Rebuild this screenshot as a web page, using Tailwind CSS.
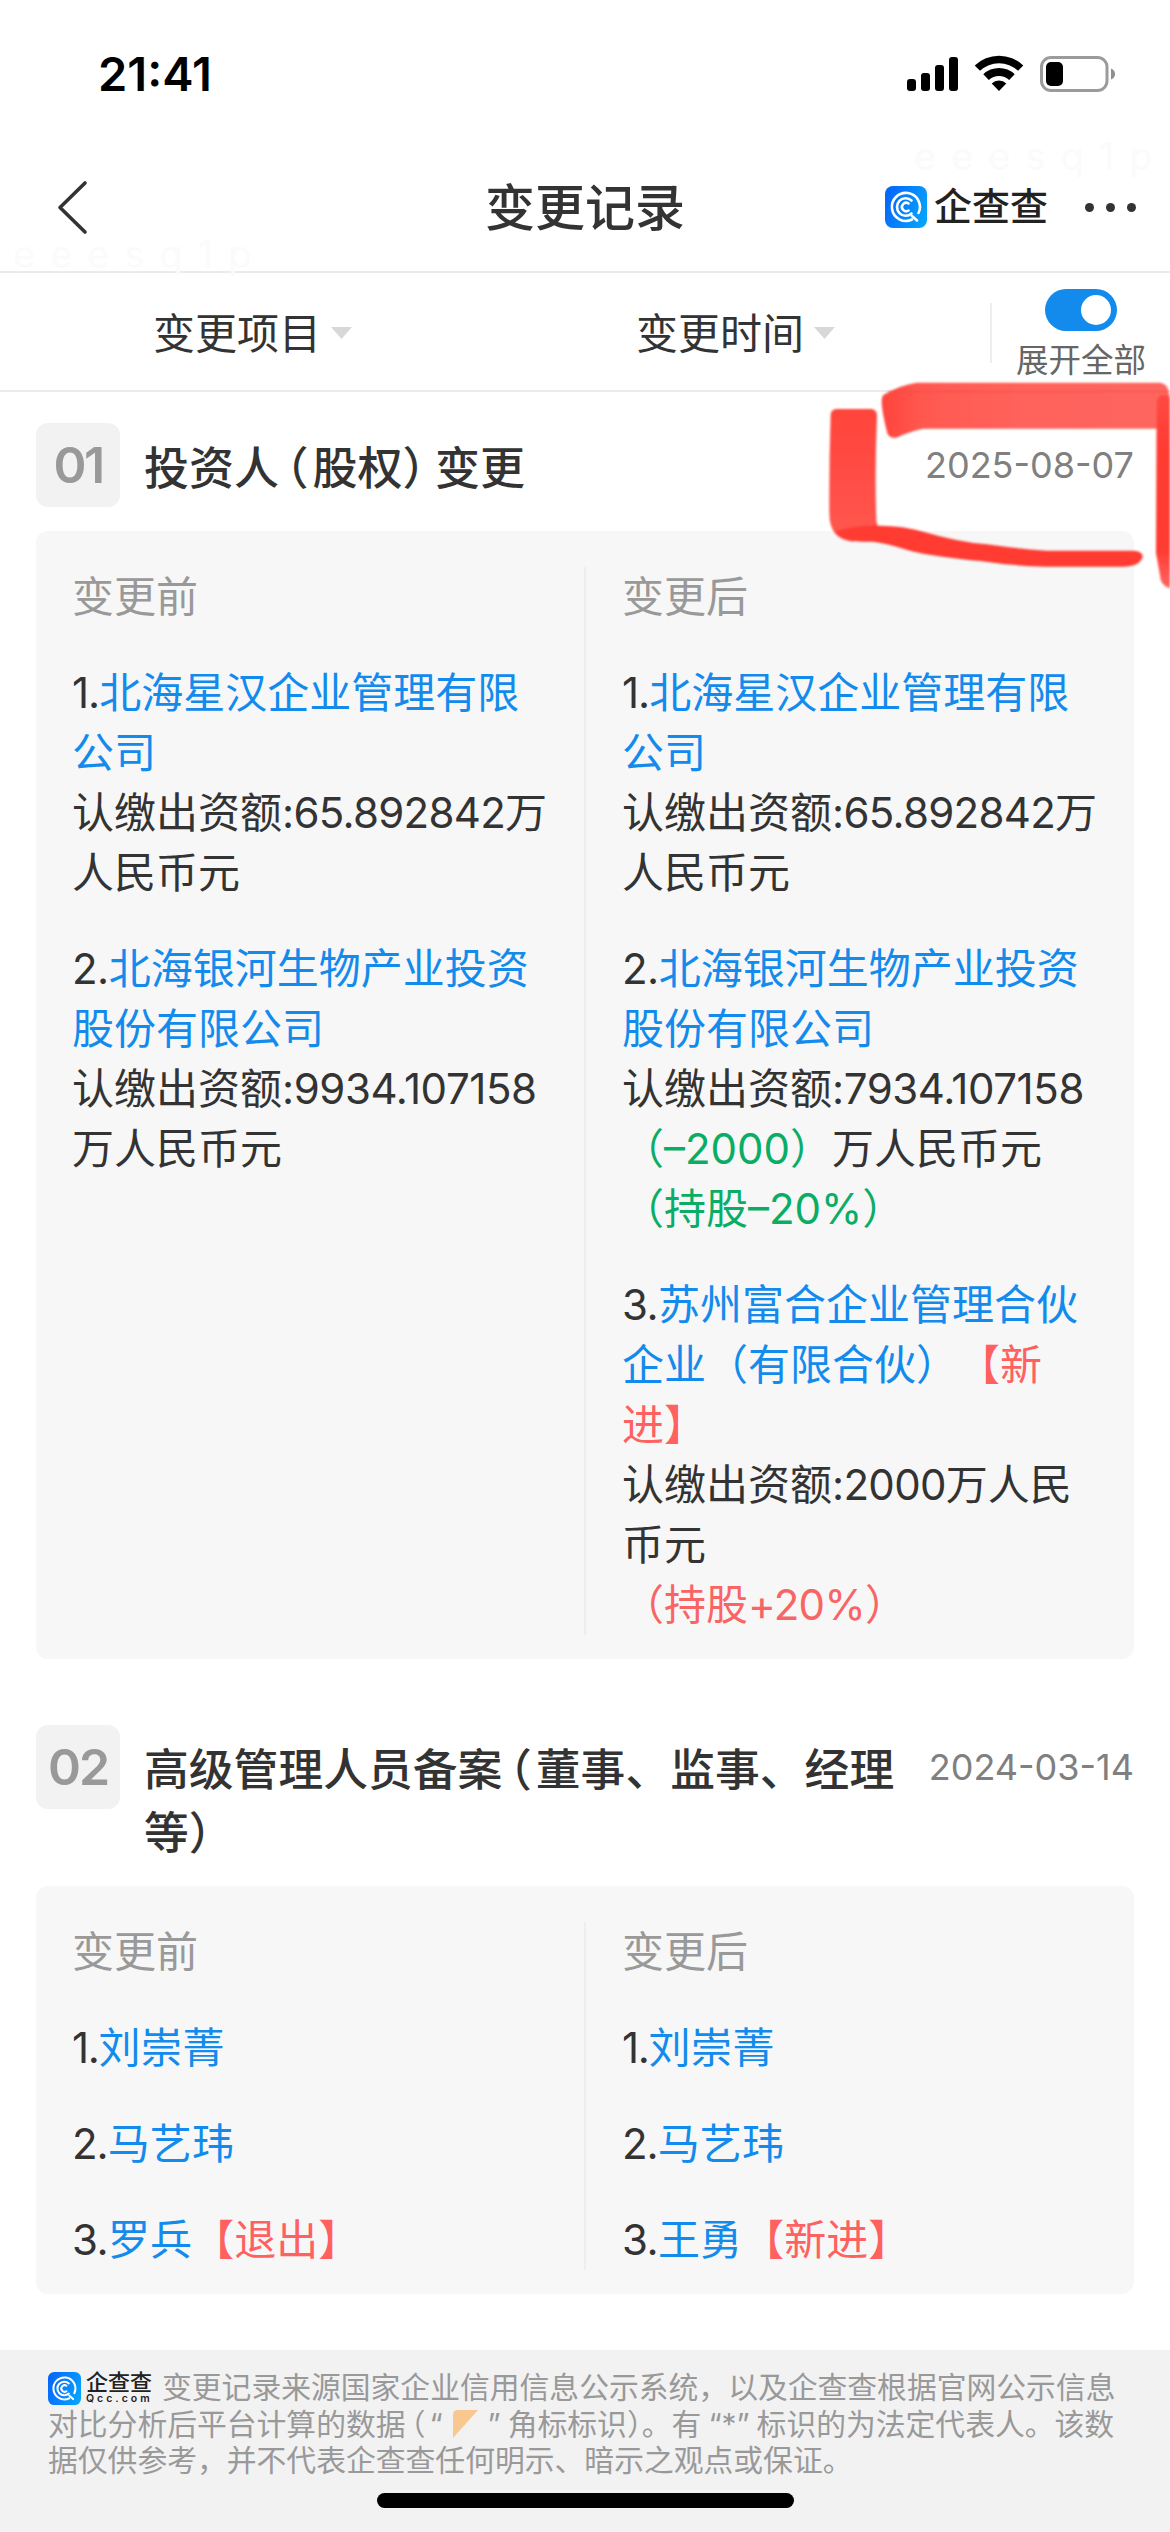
<!DOCTYPE html>
<html lang="zh-CN">
<head>
<meta charset="utf-8">
<title>变更记录</title>
<script src="https://cdn.jsdelivr.net/npm/@tailwindcss/browser@4"></script>
</head>
<body class="bg-white">
<div class="relative flex h-[2532px] w-[1170px] flex-col overflow-hidden bg-white font-['Inter','Noto_Sans_CJK_SC',sans-serif] text-[#333]">
  <!-- faint watermark -->
  <div class="absolute left-[914px] top-[132px] text-[38px] leading-[48px] tracking-[15px] text-[#fbfbfb]">eeesq1p</div>
  <div class="absolute left-[13px] top-[230px] text-[38px] leading-[48px] tracking-[15px] text-[#fbfbfb]">eeesq1p</div>

  <!-- status bar -->
  <div class="flex h-[146px] shrink-0 items-start justify-between pl-[98px] pr-[55px]">
    <div class="pt-[45px] text-[47px] font-semibold leading-[57px] text-black">21:41</div>
    <svg class="mt-[50px] h-[48px] w-[210px]" viewBox="905 50 210 48">
      <rect x="907" y="79" width="9" height="12" rx="3"/><rect x="921" y="73" width="9" height="18" rx="3"/><rect x="935" y="65" width="9" height="26" rx="3"/><rect x="949" y="57" width="9" height="34" rx="3"/>
      <path d="M974.700 65.500 A35 35 0 0 1 1023.300 65.500 L1018 70.800 A27.500 27.500 0 0 0 980 70.800 Z"/>
      <path d="M983.300 74.300 A22.500 22.500 0 0 1 1014.700 74.300 L1009.200 80 A15 15 0 0 0 988.800 80 Z"/>
      <path d="M991.700 83.500 A10.500 10.500 0 0 1 1006.300 83.500 L999 91 Z"/>
      <rect x="1041.500" y="57.500" width="65.500" height="33" rx="9.500" fill="none" stroke="#9b9b9b" stroke-width="3"/>
      <path d="M1111 68.500 Q1115 70 1115 74 Q1115 78 1111 79.500 Z" fill="#8f8f8f"/>
      <rect x="1046" y="62" width="17" height="24" rx="5"/>
    </svg>
  </div>

  <!-- navigation bar -->
  <div class="grid h-[127px] shrink-0 grid-cols-[390px_390px_390px] border-b-[2px] border-[#ebebeb]">
    <svg class="ml-[54px] mt-[33px] h-[58px] w-[38px]" viewBox="0 0 38 58" fill="none" stroke="#333" stroke-width="3.600" stroke-linecap="round" stroke-linejoin="round"><path d="M31 4 L6 28.500 L31 53"/></svg>
    <h1 class="pt-[32px] text-center text-[50px] font-medium leading-[60px]">变更记录</h1>
    <div class="flex items-start pl-[105px] pt-[40px]">
      <svg class="h-[42px] w-[42px]" viewBox="0 0 42 42">
        <defs><linearGradient id="g" x1="0" x2="1" y1=".3" y2=".7"><stop stop-color="#0667fb"/><stop offset="1" stop-color="#06a3fd"/></linearGradient></defs>
        <rect width="42" height="42" rx="8" fill="url(#g)"/>
        <g fill="none" stroke="#fff" stroke-width="2.600" stroke-linecap="round"><path d="M33.500 27 A14 14 0 1 0 27 33.500 M27 30 L32 34.500"/><path d="M26.500 14.500 A8.700 8.700 0 1 0 26.500 27.500"/><path d="M23.500 17.500 A4.200 4.200 0 1 0 23.500 24.500"/></g>
      </svg>
      <span class="ml-[7px] whitespace-nowrap text-[38px] font-medium leading-[40px] text-[#222]">企查查</span>
      <div class="ml-[36.500px] mt-[17px] flex gap-[12px]"><i class="h-[9px] w-[9px] rounded-full bg-[#333]"></i><i class="h-[9px] w-[9px] rounded-full bg-[#333]"></i><i class="h-[9px] w-[9px] rounded-full bg-[#333]"></i></div>
    </div>
  </div>

  <!-- filters -->
  <div class="flex h-[119px] shrink-0 border-b-[2px] border-[#ebebeb]">
    <div class="flex w-[483px] items-start gap-[10px] pl-[153px] pt-[31px]"><span class="whitespace-nowrap text-[42px] leading-[60px]">变更项目</span><svg class="mt-[23px] h-[12px] w-[21px]" viewBox="0 0 21 12"><path d="M0 0H21L10.500 12Z" fill="#d8d8d8"/></svg></div>
    <div class="flex w-[507px] items-start gap-[10px] pl-[153px] pt-[31px]"><span class="whitespace-nowrap text-[42px] leading-[60px]">变更时间</span><svg class="mt-[23px] h-[12px] w-[21px]" viewBox="0 0 21 12"><path d="M0 0H21L10.500 12Z" fill="#d8d8d8"/></svg></div>
    <div class="mt-[30px] h-[60px] w-[2px] bg-[#eee]"></div>
    <div class="flex w-[178px] flex-col items-center pt-[16px]">
      <div class="flex h-[42px] w-[72px] justify-end rounded-full bg-[#128bed] p-[6px]"><div class="h-[30px] w-[30px] rounded-full bg-white"></div></div>
      <div class="mt-[10px] text-[32.500px] leading-[40px] text-[#666]">展开全部</div>
    </div>
  </div>

  <!-- record 01 -->
  <section class="px-[36px] pt-[31px]">
    <div class="flex h-[108px] items-start">
      <div class="flex h-[84px] w-[84px] items-center justify-center rounded-[12px] bg-[#f2f2f2] text-[50px] font-semibold tracking-[-2.500px] text-[#999]">01</div>
      <h2 class="ml-[24px] mt-[14px] w-[770px] whitespace-nowrap text-[45px] font-medium leading-[63px]">投资人<span class="ml-[7px] mr-[4px] [font-feature-settings:'halt']">（</span>股权<span class="mr-[10px] [font-feature-settings:'halt']">）</span>变更</h2>
      <div class="ml-auto mt-[18px] whitespace-nowrap text-[36px] leading-[48px] text-[#808080]">2025-08-07</div>
    </div>
    <div class="flex h-[1128px] rounded-[12px] bg-[#f7f7f7] pb-[24px] pt-[36px] text-[42px] leading-[60px] whitespace-nowrap">
      <div class="flex w-[550px] flex-col gap-[36px] border-r-[2px] border-[#eee] pl-[36px]">
        <div class="text-[#999]">变更前</div>
        <div><span class="tracking-[-1px]">1.</span><span class="text-[#128bed]">北海星汉企业管理有限<br>公司</span><br>认缴出资额<span class="tracking-[-0.700px]">:65.892842</span>万<br>人民币元</div>
        <div><span class="tracking-[-0.500px]">2.</span><span class="text-[#128bed]">北海银河生物产业投资<br>股份有限公司</span><br>认缴出资额<span class="tracking-[-0.400px]">:9934.107158</span><br>万人民币元</div>
      </div>
      <div class="flex flex-col gap-[36px] pl-[36px]">
        <div class="text-[#999]">变更后</div>
        <div><span class="tracking-[-1px]">1.</span><span class="text-[#128bed]">北海星汉企业管理有限<br>公司</span><br>认缴出资额<span class="tracking-[-0.700px]">:65.892842</span>万<br>人民币元</div>
        <div><span class="tracking-[-0.500px]">2.</span><span class="text-[#128bed]">北海银河生物产业投资<br>股份有限公司</span><br>认缴出资额<span class="tracking-[-0.400px]">:7934.107158</span><br><span class="text-[#0aad65]">（–2000）</span>万人民币元<br><span class="text-[#0aad65]">（持股–20%）</span></div>
        <div class="[text-spacing-trim:space-all]"><span class="tracking-[-0.500px]">3.</span><span class="text-[#128bed]">苏州富合企业管理合伙<br>企业（有限合伙）</span><span class="text-[#ff6060]">【新<br>进】</span><br>认缴出资额<span class="tracking-[-0.700px]">:2000</span>万人民<br>币元<br><span class="text-[#f96464]">（持股<span class="tracking-[-0.700px]">+20%</span>）</span></div>
      </div>
    </div>
  </section>

  <!-- record 02 -->
  <section class="px-[36px] pt-[66px]">
    <div class="flex h-[161px] items-start">
      <div class="flex h-[84px] w-[84px] items-center justify-center rounded-[12px] bg-[#f2f2f2] text-[50px] font-semibold tracking-[-2px] text-[#999]">02</div>
      <h2 class="ml-[24px] mt-[14px] w-[770px] whitespace-nowrap text-[44.800px] font-medium leading-[63px]">高级管理人员备案<span class="ml-[7px] mr-[4px] [font-feature-settings:'halt']">（</span>董事、监事、经理<br>等<span class="[font-feature-settings:'halt']">）</span></h2>
      <div class="ml-auto mt-[18px] whitespace-nowrap text-[36px] leading-[48px] text-[#808080]">2024-03-14</div>
    </div>
    <div class="flex h-[408px] rounded-[12px] bg-[#f7f7f7] pb-[24px] pt-[36px] text-[42px] leading-[60px] whitespace-nowrap">
      <div class="flex w-[550px] flex-col gap-[36px] border-r-[2px] border-[#eee] pl-[36px]">
        <div class="text-[#999]">变更前</div>
        <div><span class="tracking-[-1.300px]">1.</span><span class="text-[#128bed]">刘崇菁</span></div>
        <div><span class="tracking-[-1px]">2.</span><span class="text-[#128bed]">马艺玮</span></div>
        <div><span class="tracking-[-0.500px]">3.</span><span class="text-[#128bed]">罗兵</span><span class="text-[#ff6060]">【退出】</span></div>
      </div>
      <div class="flex flex-col gap-[36px] pl-[36px]">
        <div class="text-[#999]">变更后</div>
        <div><span class="tracking-[-1.300px]">1.</span><span class="text-[#128bed]">刘崇菁</span></div>
        <div><span class="tracking-[-1px]">2.</span><span class="text-[#128bed]">马艺玮</span></div>
        <div><span class="tracking-[-0.500px]">3.</span><span class="text-[#128bed]">王勇</span><span class="text-[#ff6060]">【新进】</span></div>
      </div>
    </div>
  </section>

  <!-- disclaimer -->
  <footer class="mt-auto flex h-[182px] shrink-0 flex-col bg-[#f2f2f2] px-[48px] pt-[19px] text-[29.800px] leading-[36.500px] text-[#999] whitespace-nowrap">
    <div class="flex h-[36.500px]">
      <svg class="mt-[2.500px] h-[33px] w-[33px]" viewBox="0 0 42 42"><rect width="42" height="42" rx="8" fill="url(#g)"/><g fill="none" stroke="#fff" stroke-width="2.600" stroke-linecap="round"><path d="M33.500 27 A14 14 0 1 0 27 33.500 M27 30 L32 34.500"/><path d="M26.500 14.500 A8.700 8.700 0 1 0 26.500 27.500"/><path d="M23.500 17.500 A4.200 4.200 0 1 0 23.500 24.500"/></g></svg>
      <div class="ml-[5px] w-[76px] pt-[2px] text-[#222]"><div class="text-[22px] font-medium leading-[23px]">企查查</div><div class="text-[10.500px] font-semibold leading-[10px] tracking-[3px]">Qcc.com</div></div>
      <div>变更记录来源国家企业信用信息公示系统，以及企查查根据官网公示信息</div>
    </div>
    <div class="flex"><span>对比分析后平台计算的数据</span><span class="ml-[5px] mr-[4px] [font-feature-settings:'halt']">（</span><span>“</span><svg class="ml-[10px] mr-[10px] mt-[4px] h-[28px] w-[25px]" viewBox="0 0 25 28"><path d="M0 28V5Q0 0 5 0H25Z" fill="#f8c88e"/></svg><span class="mr-[7px]">”</span><span>角标标识</span><span class="[font-feature-settings:'halt']">）</span><span>。有</span><span class="mx-[7px]">“*”</span><span>标识的为法定代表人。该数</span></div>
    <div>据仅供参考，并不代表企查查任何明示、暗示之观点或保证。</div>
    <div class="ml-[329px] mt-[14px] h-[15px] w-[417px] rounded-full bg-black"></div>
  </footer>

  <!-- red marker strokes around the first date -->
  <svg class="absolute left-[800px] top-[370px] h-[230px] w-[370px]" viewBox="0 0 1110 690">
    <defs>
      <filter id="b" x="-5%" y="-5%" width="110%" height="110%"><feGaussianBlur stdDeviation="3"/></filter>
      <linearGradient id="t" x1="0" x2="1"><stop stop-color="#ff453c"/><stop offset=".15" stop-color="#ff5950"/><stop offset=".5" stop-color="#ff635c"/><stop offset="1" stop-color="#ff665f"/></linearGradient>
      <linearGradient id="l" x1="0" x2="0" y1="0" y2="1"><stop stop-color="#ff443b"/><stop offset="1" stop-color="#ff574f"/></linearGradient>
      <linearGradient id="r" x1="0" x2="0" y1="0" y2="1"><stop stop-color="#ff4b42"/><stop offset=".3" stop-color="#ff3a32"/><stop offset=".8" stop-color="#ff3b33"/><stop offset="1" stop-color="#ff665f"/></linearGradient>
    </defs>
    <g filter="url(#b)">
      <path d="M250 75 Q300 45 350 38 H1080 Q1108 42 1108 80 V176 H370 Q330 184 288 203 Q268 206 262 190 Q244 120 245 90 Q246 80 250 75Z" fill="url(#t)"/>
      <path d="M265 65H1100" stroke="#f04840" stroke-width="4" opacity=".6"/>
      <path d="M92 135 Q92 118 110 117 H215 Q232 119 231 140 Q224 300 229 450 L235 480 L160 515 Q88 510 88 430 Q87 280 92 135Z" fill="url(#l)"/>
      <path d="M105 485 Q160 465 240 467 Q310 467 370 485 Q470 515 560 523 Q660 537 740 542 H1000 Q1028 542 1028 562 Q1018 590 970 590 H740 Q640 588 540 573 Q400 560 330 542 Q260 520 220 515 Q130 518 105 485Z" fill="#ff3b33"/>
      <path d="M1070 90 Q1080 65 1110 80 V655 Q1090 650 1082 630 Q1074 580 1068 550Z" fill="url(#r)"/>
    </g>
  </svg>
</div>
</body>
</html>
